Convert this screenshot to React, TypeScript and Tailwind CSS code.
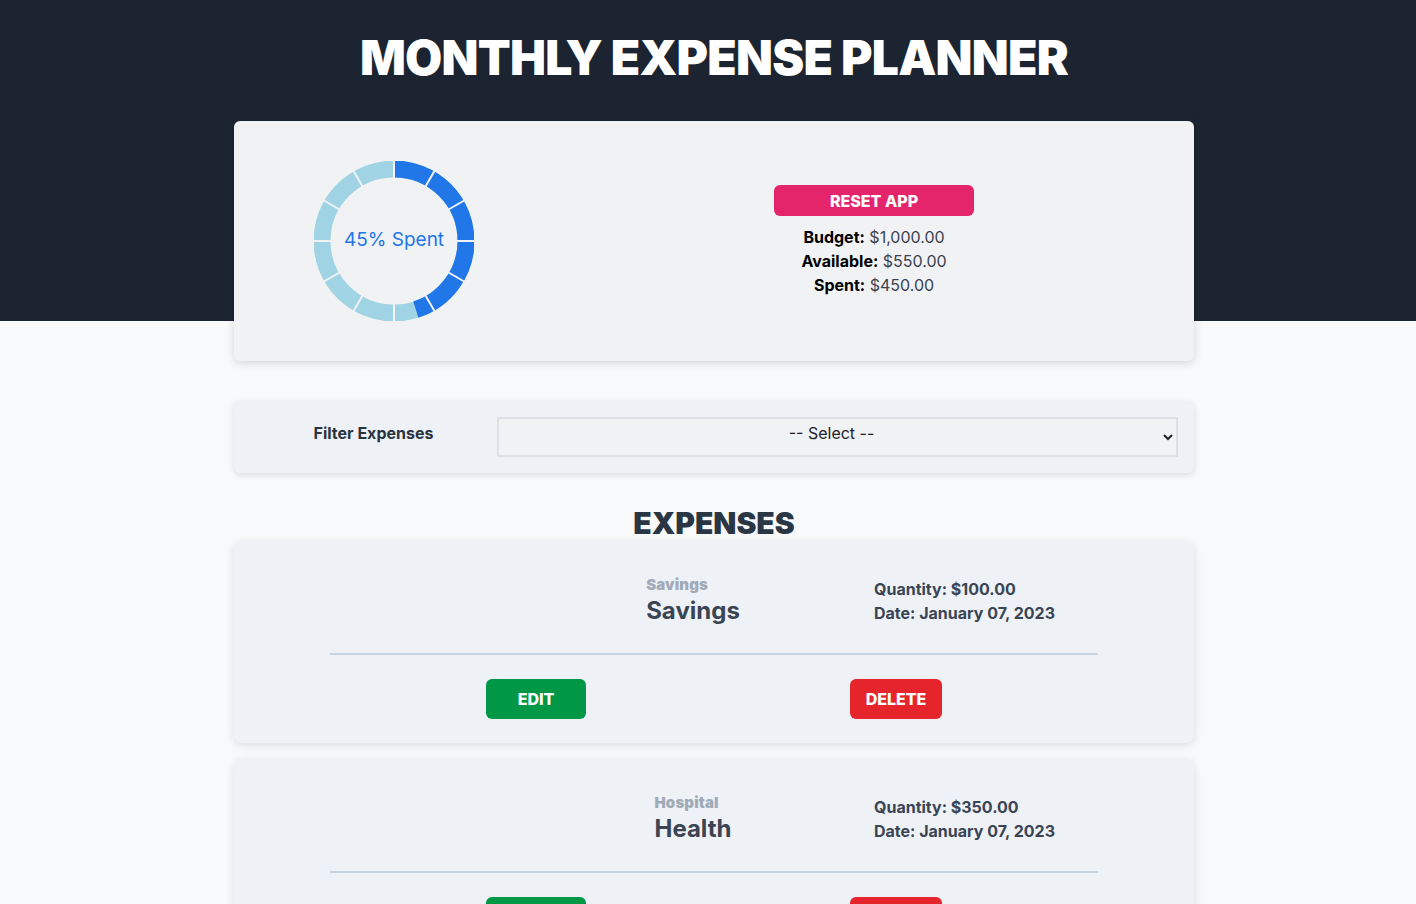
import React from "react";

interface Expense {
  id: number;
  name: string;
  category: string;
  amount: number;
  date: string;
}

const expenses: Expense[] = [
  { id: 1, name: "Savings", category: "Savings", amount: 100, date: "January 07, 2023" },
  { id: 2, name: "Hospital", category: "Health", amount: 350, date: "January 07, 2023" },
];

const money = (n: number) =>
  "$" + n.toLocaleString("en-US", { minimumFractionDigits: 2, maximumFractionDigits: 2 });

const Donut: React.FC<{ percent: number }> = ({ percent }) => {
  const r = 72;
  const c = 2 * Math.PI * r;
  const ticks = Array.from({ length: 12 }, (_, i) => i * 30);
  return (
    <div className="relative w-[160px] h-[160px]">
      <svg width="160" height="160" viewBox="0 0 160 160">
        <circle cx="80" cy="80" r={r} fill="none" stroke="#a0d3e3" strokeWidth="17" />
        <circle
          cx="80"
          cy="80"
          r={r}
          fill="none"
          stroke="#2176e8"
          strokeWidth="17"
          strokeDasharray={`${(c * percent) / 100} ${c}`}
          transform="rotate(-90 80 80)"
        />
        {ticks.map((deg) => (
          <line
            key={deg}
            x1="80"
            y1="-2"
            x2="80"
            y2="26"
            stroke="#f1f2f4"
            strokeWidth="2"
            transform={`rotate(${deg} 80 80)`}
          />
        ))}
      </svg>
      <p className="absolute inset-0 flex items-center justify-center pb-[2px] text-[19px] text-[#2176e8]">
        {percent}% Spent
      </p>
    </div>
  );
};

const ExpenseCard: React.FC<{ expense: Expense }> = ({ expense }) => (
  <div className="bg-[#eef2f7] rounded-lg shadow-[0_2px_8px_rgba(0,0,0,0.12)] pt-[34px] pb-6">
    <div className="flex items-center">
      <div className="w-[640px] pl-[278px] flex justify-center">
        <div>
          <p className="text-[15px] leading-5 font-black tracking-[0.01em] text-[#a0aab8]">{expense.name}</p>
          <p className="text-2xl leading-8 font-bold text-[#3a4453]">{expense.category}</p>
        </div>
      </div>
      <div className="text-base leading-6 font-bold text-[#3a4453]">
        <p>Quantity: {money(expense.amount)}</p>
        <p>Date: {expense.date}</p>
      </div>
    </div>
    <div className="mx-24 mt-[26px] border-t-2 border-[#c6d3e1]" />
    <div className="flex mt-6 pl-[252px]">
      <button className="w-[100px] h-10 rounded-md bg-[#009846] text-white font-extrabold text-base">
        EDIT
      </button>
      <button className="ml-[264px] w-[92px] h-10 rounded-md bg-[#e5242b] text-white font-extrabold text-base">
        DELETE
      </button>
    </div>
  </div>
);

const App: React.FC = () => {
  const budget = 1000;
  const spent = expenses.reduce((s, e) => s + e.amount, 0);
  const available = budget - spent;
  const percent = Math.round((spent / budget) * 100);

  return (
    <div className="min-h-screen bg-[#f7f9fb] font-['Inter',sans-serif] pb-10">
      <header className="h-[321px] bg-[#1b2430] pt-[34px] pl-3">
        <h1 className="text-center text-white text-5xl leading-[48px] font-black tracking-[-0.015em]">
          MONTHLY EXPENSE PLANNER
        </h1>
      </header>

      <div className="pl-3">
        <main className="relative -mt-[200px] w-[960px] mx-auto">
          <div className="bg-[#f1f2f4] rounded-md shadow-[0_2px_8px_rgba(0,0,0,0.15)] py-10 pl-20 flex items-center">
            <Donut percent={percent} />
            <div className="ml-[200px] w-[400px] flex flex-col items-center">
              <button className="w-[200px] h-[31px] rounded-md bg-[#e4256c] text-white font-extrabold text-base">
                RESET APP
              </button>
              <div className="mt-[9px] text-center text-base leading-6 text-[#3b4250]">
                <p>
                  <span className="font-bold text-black">Budget:</span> {money(budget)}
                </p>
                <p>
                  <span className="font-bold text-black">Available:</span> {money(available)}
                </p>
                <p>
                  <span className="font-bold text-black">Spent:</span> {money(spent)}
                </p>
              </div>
            </div>
          </div>

          <div className="mt-10 bg-[#eef2f6] rounded-md shadow-[0_2px_6px_rgba(0,0,0,0.12)] p-4 grid grid-cols-[247px_1fr] items-center">
            <label className="mb-2 text-center font-bold text-base text-[#2a3340]">Filter Expenses</label>
            <select className="h-10 pb-2 border-2 border-[#dcdfe3] bg-[#f1f2f4] text-center text-base text-[#1f2328]">
              <option>-- Select --</option>
              <option>Savings</option>
              <option>Health</option>
            </select>
          </div>

          <h2 className="mt-8 text-center text-3xl leading-9 font-black text-[#2b3644]">EXPENSES</h2>

          <div className="flex flex-col gap-4">
            {expenses.map((e) => (
              <ExpenseCard key={e.id} expense={e} />
            ))}
          </div>
        </main>
      </div>
    </div>
  );
};

export default App;
